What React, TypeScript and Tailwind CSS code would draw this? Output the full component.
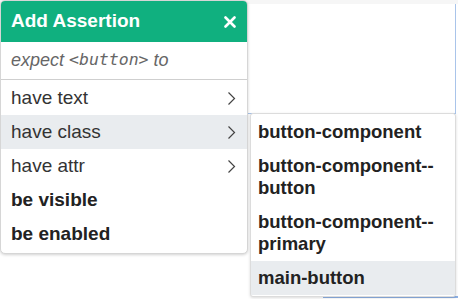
import React from "react";

type Item = { label: string; bold?: boolean; sub?: boolean; active?: boolean };

const items: Item[] = [
  { label: "have text", sub: true },
  { label: "have class", sub: true, active: true },
  { label: "have attr", sub: true },
  { label: "be visible", bold: true },
  { label: "be enabled", bold: true },
];

const classes = [
  { label: "button-component" },
  { label: "button-component--button" },
  { label: "button-component--primary" },
  { label: "main-button", active: true },
];

function Chevron() {
  return (
    <svg width="9" height="15" viewBox="0 0 9 15" className="shrink-0">
      <polyline points="1.5,1.5 7.5,7.5 1.5,13.5" fill="none" stroke="#444" strokeWidth="1.2" />
    </svg>
  );
}

function CloseIcon() {
  return (
    <svg width="12" height="12" viewBox="0 0 12 12">
      <path d="M1.5 1.5 L10.5 10.5 M10.5 1.5 L1.5 10.5" stroke="#fff" strokeWidth="2.6" strokeLinecap="round" />
    </svg>
  );
}

export default function App() {
  return (
    <div
      className="relative w-[458px] h-[299px] overflow-hidden bg-white"
      style={{ fontFamily: '"Liberation Sans", Arial, sans-serif' }}
    >
      {/* page behind the popup */}
      <div className="h-[4px] bg-[#f6f6f6]" />
      <div className="ml-[246px] mr-[2px] h-[110px] border-r border-b border-[#a9c4ea] bg-white" />
      <div className="ml-[323px] mt-[182px] h-[2px] bg-[#8fb2e6]" />

      {/* assertion menu */}
      <div className="absolute left-0 top-0 w-[248px] rounded-[5px] border border-[#d6d6d6] bg-white shadow-[0_1px_3px_rgba(0,0,0,0.18)] overflow-hidden">
        <div className="flex h-[41px] items-center justify-between bg-[#10b07f] pl-[10px] pr-[11px]">
          <span className="text-[19px] font-bold text-white">Add Assertion</span>
          <CloseIcon />
        </div>
        <div className="flex h-[38px] items-center border-b border-[#cfcfcf] px-[10px] text-[18px] italic text-[#666]">
          <span>expect&nbsp;</span>
          <span className="text-[16.5px]" style={{ fontFamily: '"DejaVu Sans Mono", monospace' }}>
            &lt;button&gt;
          </span>
          <span>&nbsp;to</span>
        </div>
        <div className="pt-[1px] pb-[2px]">
          {items.map((it) => (
            <div
              key={it.label}
              className={`flex h-[34px] items-center justify-between pl-[10px] pr-[11px] text-[19px] ${
                it.active ? "bg-[#e9ecef]" : ""
              } ${it.bold ? "font-bold text-[#222]" : "text-[#333]"}`}
            >
              <span>{it.label}</span>
              {it.sub && <Chevron />}
            </div>
          ))}
        </div>
      </div>

      {/* class submenu */}
      <div className="absolute left-[250px] top-[113px] w-[206px] rounded-[3px] border border-[#dcdcdc] bg-white py-[1px] shadow-[0_1px_3px_rgba(0,0,0,0.15)]">
        {classes.map((c) => (
          <div
            key={c.label}
            className={`px-[7px] py-[6px] text-[18.5px] leading-[22px] font-bold text-[#222] ${
              c.active ? "bg-[#e9ecef]" : ""
            }`}
          >
            {c.label}
          </div>
        ))}
      </div>
    </div>
  );
}
